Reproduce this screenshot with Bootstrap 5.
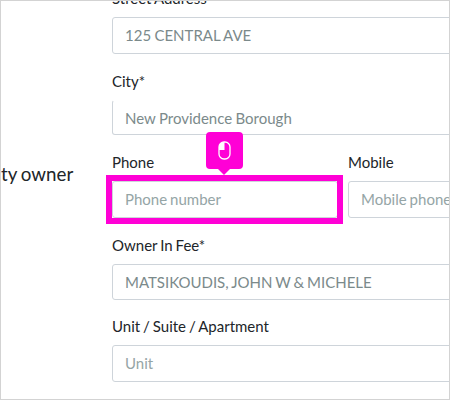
<!DOCTYPE html>
<html lang="en">
<head>
<meta charset="utf-8">
<meta name="viewport" content="width=device-width, initial-scale=1">
<title>Property owner</title>
<link href="https://cdn.jsdelivr.net/npm/bootstrap@5.3.0/dist/css/bootstrap.min.css" rel="stylesheet">
<style>
body{font-family:Lato,"Liberation Sans",sans-serif;font-size:15px;line-height:22px;word-spacing:-.9px;color:#212529;background:#fff}
.pane{width:450px;height:400px;border:1px solid #d3d3d3}
.side{width:111px;flex:none;padding-top:160px;font-size:18.75px;line-height:26px}
.fields{width:450px;flex:none;margin-top:-14px}
.field-label{display:block;height:22px;margin-bottom:8px;white-space:nowrap}
.field{margin-bottom:15px}
.form-control,.form-control:focus{font-family:inherit;font-size:15px;line-height:22px;height:37px;padding:0 12px 2px;border:1px solid #ced4da;border-radius:3px;color:#7b8a8b;box-shadow:none;word-spacing:inherit}
.form-control::placeholder{color:#95a5a6;opacity:1}
.lowered{padding-top:1px}
.lowered .form-control{height:36px;padding-bottom:0}
.open-top{margin-bottom:16px}
.open-top .form-control{height:35px;border-top-color:transparent}
.loose .form-control{word-spacing:-.5px}
.half{width:226px;flex:none}
.half + .half{margin-left:10px}
.target{position:relative}
.target::after{content:"";position:absolute;inset:-6px -5px -6px -6px;border:6px solid #ff00d6;pointer-events:none}
.tip{position:absolute;z-index:2;left:94px;top:-49px;width:37px;height:37px;border-radius:4px;background:#ff00d6}
.tip::after{content:"";position:absolute;left:12px;top:37px;border:6.5px solid transparent;border-top:6px solid #ff00d6;border-bottom:0}
</style>
</head>
<body>
<main class="pane d-flex overflow-hidden">
  <div class="side text-nowrap">ty owner</div>
  <form class="fields">
    <div class="field loose"><label class="field-label" for="street">Street Address*</label><input id="street" class="form-control" value="125 CENTRAL AVE"></div>
    <div class="field lowered open-top loose"><label class="field-label" for="city">City*</label><input id="city" class="form-control" value="New Providence Borough"></div>
    <div class="field d-flex">
      <div class="half"><label class="field-label" for="phone">Phone</label>
        <div class="target"><input id="phone" class="form-control" placeholder="Phone number">
          <div class="tip d-flex align-items-center justify-content-center"><svg width="13" height="19" viewBox="0 0 13 19" fill="none"><path d="M6.5 1H6A5 5 0 0 0 1 6V9H6.5Z" fill="#fff"/><rect x="1" y="1" width="11" height="17" rx="5" stroke="#fff" stroke-width="1.3"/></svg></div>
        </div></div>
      <div class="half"><label class="field-label" for="mobile">Mobile</label><input id="mobile" class="form-control" placeholder="Mobile phone number"></div>
    </div>
    <div class="field lowered"><label class="field-label" for="owner">Owner In Fee*</label><input id="owner" class="form-control" value="MATSIKOUDIS, JOHN W &amp; MICHELE"></div>
    <div class="field"><label class="field-label" for="unit">Unit / Suite / Apartment</label><input id="unit" class="form-control" placeholder="Unit"></div>
  </form>
</main>
<script src="https://cdn.jsdelivr.net/npm/bootstrap@5.3.0/dist/js/bootstrap.bundle.min.js"></script>
</body>
</html>
